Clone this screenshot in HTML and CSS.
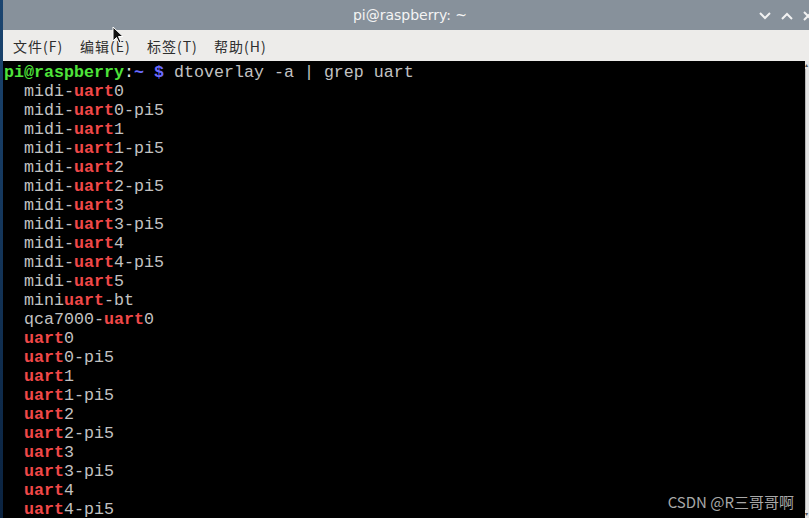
FILE: index.html
```html
<!DOCTYPE html>
<html lang="zh">
<head>
  <meta charset="UTF-8">
  <title>pi@raspberry: ~</title>
  <link rel="stylesheet" href="styles.css">
</head>
<body>
  <div class="desk">
    <div class="window">
      <div class="titlebar">
        <span class="title">pi@raspberry: ~</span>
        <div class="controls">
          <svg width="12" height="8" viewBox="0 0 12 8"><path d="M1 1 L6 6 L11 1" fill="none" stroke="#f2f2f2" stroke-width="2"/></svg>
          <svg width="12" height="8" viewBox="0 0 12 8"><path d="M1 7 L6 2 L11 7" fill="none" stroke="#f2f2f2" stroke-width="2"/></svg>
          <svg width="10" height="10" viewBox="0 0 10 10"><path d="M1 1 L9 9 M9 1 L1 9" fill="none" stroke="#f2f2f2" stroke-width="2"/></svg>
        </div>
        <svg class="cursor" width="12" height="18" viewBox="0 0 12 18"><path d="M1 1 L1 15 L4.5 11.5 L7 17 L9 16 L6.5 10.5 L11 10.5 Z" fill="#111" stroke="#fff" stroke-width="1"/></svg>
      </div>
      <div class="menubar">
        <span>文件(F)</span>
        <span>编辑(E)</span>
        <span>标签(T)</span>
        <span>帮助(H)</span>
      </div>
      <div class="term">
        <pre class="screen"><span class="g">pi@raspberry</span><span class="w">:</span><span class="b">~ $</span> dtoverlay -a | grep uart
  midi-<span class="r">uart</span>0
  midi-<span class="r">uart</span>0-pi5
  midi-<span class="r">uart</span>1
  midi-<span class="r">uart</span>1-pi5
  midi-<span class="r">uart</span>2
  midi-<span class="r">uart</span>2-pi5
  midi-<span class="r">uart</span>3
  midi-<span class="r">uart</span>3-pi5
  midi-<span class="r">uart</span>4
  midi-<span class="r">uart</span>4-pi5
  midi-<span class="r">uart</span>5
  mini<span class="r">uart</span>-bt
  qca7000-<span class="r">uart</span>0
  <span class="r">uart</span>0
  <span class="r">uart</span>0-pi5
  <span class="r">uart</span>1
  <span class="r">uart</span>1-pi5
  <span class="r">uart</span>2
  <span class="r">uart</span>2-pi5
  <span class="r">uart</span>3
  <span class="r">uart</span>3-pi5
  <span class="r">uart</span>4
  <span class="r">uart</span>4-pi5</pre>
        <div class="scroll">
          <span class="arrow">▴</span>
          <span class="track"></span>
          <span class="arrow">▾</span>
        </div>
        <div class="mark">CSDN @R三哥哥啊</div>
      </div>
    </div>
  </div>
</body>
</html>
```

FILE: styles.css
```css
body {
  margin: 0;
  width: 809px;
  height: 518px;
  overflow: hidden;
  background: #0d2a4a;
}

.desk {
  display: flex;
  height: 518px;
  padding-left: 3px;
  background: linear-gradient(to bottom, #1b4570, #0b2340);
}

.window {
  flex: 1;
  display: flex;
  flex-direction: column;
}

.titlebar {
  position: relative;
  height: 30px;
  background: #87919b;
  display: flex;
  align-items: center;
  justify-content: center;
}

.title {
  color: #f4f4f4;
  font-family: "DejaVu Sans", sans-serif;
  font-size: 14px;
  margin-left: 8px;
}

.controls {
  position: absolute;
  right: -4px;
  top: 11px;
  display: flex;
  align-items: center;
  gap: 10px;
}

.controls svg {
  display: block;
}

.cursor {
  position: absolute;
  left: 109px;
  top: 26px;
  z-index: 2;
}

.menubar {
  height: 31px;
  background: #edecea;
  display: flex;
  align-items: center;
  padding-left: 10px;
  padding-top: 1px;
  box-sizing: border-box;
  font-family: "Noto Sans CJK SC", "DejaVu Sans", sans-serif;
  font-size: 14px;
  letter-spacing: 1px;
  color: #2e2e2e;
}

.menubar span {
  width: 67px;
  white-space: nowrap;
}

.term {
  position: relative;
  flex: 1;
  display: flex;
  background: #000;
  overflow: hidden;
}

.screen {
  flex: 1;
  margin: 0;
  padding-top: 2px;
  padding-left: 1px;
  font-family: "Liberation Mono", monospace;
  font-size: 16.67px;
  line-height: 19px;
  color: #c2c2c2;
}

.g {
  color: #4ee33a;
  font-weight: bold;
}

.w {
  color: #e0e0e0;
}

.b {
  color: #6b6bff;
  font-weight: bold;
}

.r {
  color: #f04848;
  font-weight: bold;
}

.scroll {
  width: 4px;
  display: flex;
  flex-direction: column;
  background: #e4e4e4;
  font-size: 6px;
  line-height: 8px;
  color: #555;
}

.scroll .track {
  flex: 1;
  border-left: 1px solid #b8b8b8;
}

.arrow {
  height: 8px;
  overflow: hidden;
}

.mark {
  position: absolute;
  right: 15px;
  bottom: 6px;
  font-family: "Noto Sans CJK SC", "DejaVu Sans", sans-serif;
  font-size: 15px;
  color: #a8a8a8;
}
```
